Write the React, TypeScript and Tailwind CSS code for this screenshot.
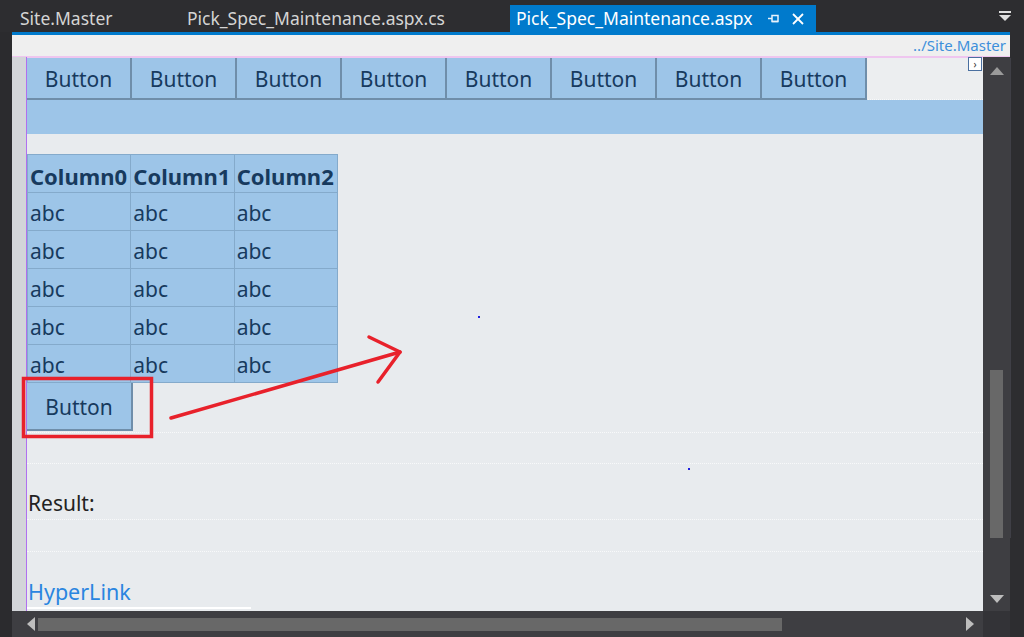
import React from 'react';

const font = { fontFamily: '"Noto Sans", "Open Sans", sans-serif' };

function TabBar() {
  return (
    <div className="flex h-[32px] items-end bg-[#2d2d30] text-[17.5px] leading-none" style={font}>
      <div className="w-[12px]" />
      <div className="flex h-[27px] w-[168px] items-center pl-[8px] text-[#d4d4d4]">Site.Master</div>
      <div className="flex h-[27px] w-[330px] items-center pl-[7px] text-[#d4d4d4]">Pick_Spec_Maintenance.aspx.cs</div>
      <div className="flex h-[27px] w-[306px] items-center bg-[#007acc] pl-[6px] text-white">
        <span>Pick_Spec_Maintenance.aspx</span>
        {/* pin icon */}
        <svg className="ml-[14px]" width="14" height="14" viewBox="0 0 14 14" fill="none" stroke="#e8f2fb" strokeWidth="1.5">
          <rect x="5" y="3.5" width="6" height="6" />
          <line x1="5" y1="9.5" x2="11" y2="9.5" />
          <line x1="1" y1="6.5" x2="5" y2="6.5" />
        </svg>
        <svg className="ml-[10px]" width="14" height="14" viewBox="0 0 14 14" stroke="#ffffff" strokeWidth="1.8">
          <line x1="2" y1="2" x2="12" y2="12" />
          <line x1="12" y1="2" x2="2" y2="12" />
        </svg>
      </div>
      <div className="flex-1" />
      <div className="flex h-[32px] w-[34px] items-center justify-start pl-[8px]">
        <svg width="14" height="14" viewBox="0 0 14 14">
          <rect x="1" y="2" width="12" height="2" fill="#e0e0e0" />
          <polygon points="1,6 13,6 7,12" fill="#e0e0e0" />
        </svg>
      </div>
    </div>
  );
}

function DottedLine({ className = '' }: { className?: string }) {
  return <div className={`border-t border-dotted border-white/70 ${className}`} />;
}

function BlueButton() {
  return (
    <div className="flex h-[42px] w-[105px] shrink-0 items-center justify-center border-r-2 border-b-2 border-[#6f8eaa] bg-[#9dc5e8] pt-[3px] text-[21px] text-[#173a5e]">
      Button
    </div>
  );
}

function Canvas() {
  const rows = [0, 1, 2, 3, 4];
  return (
    <div className="relative flex-1 overflow-hidden bg-[#e8ebee]" style={font}>
      {/* toolbar of buttons */}
      <div className="flex h-[42px] border-t border-[#efc6ef]">
        <div className="flex">
          {[0, 1, 2, 3, 4, 5, 6, 7].map((i) => (
            <BlueButton key={i} />
          ))}
        </div>
        <div className="flex-1 bg-[#eceef0]" />
      </div>
      <DottedLine />
      <div className="h-[34px] bg-[#9dc5e8]" />

      {/* grid */}
      <div className="pt-[20px]">
        <table className="w-[311px] table-fixed border-collapse leading-none text-[#173a5e]">
          <thead>
            <tr className="h-[38px]">
              {['Column0', 'Column1', 'Column2'].map((c) => (
                <th key={c} className="overflow-visible whitespace-nowrap border border-[#84aacb] bg-[#9dc5e8] pl-[2px] pr-0 pt-[4px] text-left text-[22px] font-bold">
                  {c}
                </th>
              ))}
            </tr>
          </thead>
          <tbody>
            {rows.map((r) => (
              <tr key={r} className="h-[38px]">
                {[0, 1, 2].map((c) => (
                  <td key={c} className="border border-[#84aacb] bg-[#9dc5e8] px-[2px] pt-[4px] text-left text-[21px]">
                    abc
                  </td>
                ))}
              </tr>
            ))}
          </tbody>
        </table>
        <div className="flex h-[48px] w-[106px] items-center justify-center border-r-2 border-b-2 border-[#6f8eaa] bg-[#9dc5e8] pt-[4px] text-[21px] text-[#173a5e]">
          Button
        </div>
      </div>

      <DottedLine className="mt-[1px]" />
      <div className="h-[30px]" />
      <DottedLine />
      <div className="flex h-[55px] items-end pb-[5px] pl-[1px] text-[21px] leading-none text-[#222222]">Result:</div>
      <DottedLine />
      <div className="h-[31px]" />
      <DottedLine />
      <div className="flex h-[55px] items-end pb-[5px] pl-[1px] text-[21.5px] leading-none text-[#2a85e0]">HyperLink</div>
      <div className="h-[2px] w-[224px] bg-white" />

      {/* smart tag glyph */}
      <div className="absolute right-[1px] top-[0px] flex h-[14px] w-[14px] items-center justify-center border border-[#4a6fa0] bg-white text-[10px] leading-none text-[#333]">
        ›
      </div>

      {/* stray designer dots */}
      <div className="absolute left-[451px] top-[259px] h-[2px] w-[2px] bg-[#2020e0]" />
      <div className="absolute left-[661px] top-[411px] h-[2px] w-[2px] bg-[#2020e0]" />
    </div>
  );
}

function VScroll() {
  return (
    <div className="flex w-[27px] flex-col items-center bg-[#3e3e42]">
      <svg className="mt-[10px]" width="14" height="8" viewBox="0 0 14 8">
        <polygon points="0,8 14,8 7,0" fill="#9a9a9a" />
      </svg>
      <div className="mt-[295px] h-[168px] w-[13px] bg-[#686868]" />
      <div className="flex-1" />
      <svg className="mb-[8px]" width="14" height="8" viewBox="0 0 14 8">
        <polygon points="0,0 14,0 7,8" fill="#bdbdbd" />
      </svg>
    </div>
  );
}

function HScroll() {
  return (
    <div className="flex h-[26px] items-center bg-[#3e3e42]">
      <div className="flex w-[26px] items-center justify-end pr-[3px]">
        <svg width="8" height="14" viewBox="0 0 8 14">
          <polygon points="8,0 8,14 0,7" fill="#bdbdbd" />
        </svg>
      </div>
      <div className="h-[13px] w-[744px] bg-[#686868]" />
      <div className="flex-1" />
      <div className="flex w-[17px] items-center">
        <svg width="8" height="14" viewBox="0 0 8 14">
          <polygon points="0,0 0,14 8,7" fill="#bdbdbd" />
        </svg>
      </div>
      <div className="h-[26px] w-[27px] bg-[#333337]" />
    </div>
  );
}

export default function App() {
  return (
    <div className="relative flex h-[637px] w-[1024px] flex-col overflow-hidden bg-[#2d2d30]">
      <TabBar />
      <div className="flex flex-1">
        <div className="w-[12px] bg-[#2b2b2e]" />
        <div className="flex w-[998px] flex-col">
          <div className="h-[3px] bg-[#007acc]" />
          <div className="flex h-[22px] items-center justify-end border-b border-[#efc6ef] bg-[#efefef] pr-[4px] text-[15px] leading-none text-[#3d8fdb]" style={font}>
            ../Site.Master
          </div>
          <div className="flex flex-1">
            <div className="w-[14px] bg-[#d3d5d9]" />
            <div className="w-[1px] bg-[#b070f0]" />
            <Canvas />
            <VScroll />
          </div>
          <HScroll />
        </div>
        <div className="flex w-[14px] flex-col bg-[#2d2d30]">
          <div className="mt-[26px] h-[480px] border-l border-[#3f3f46]" />
        </div>
      </div>

      {/* annotation drawn over the screenshot: red box and arrow */}
      <svg className="pointer-events-none absolute left-0 top-0" width="1024" height="637">
        <rect x="23.5" y="378.5" width="128" height="58" fill="none" stroke="#e8212b" strokeWidth="3.5" />
        <line x1="171" y1="418" x2="400" y2="352" stroke="#e8212b" strokeWidth="3.5" strokeLinecap="round" />
        <polyline points="369,337 400,352 378,382" fill="none" stroke="#e8212b" strokeWidth="3.5" strokeLinecap="round" strokeLinejoin="round" />
      </svg>
    </div>
  );
}
